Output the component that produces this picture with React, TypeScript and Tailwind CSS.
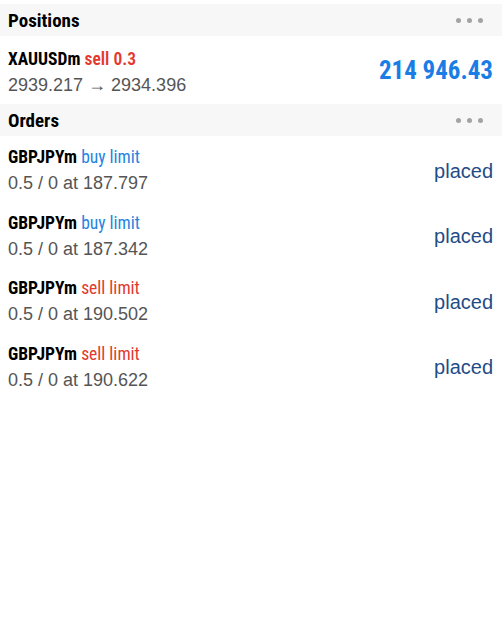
import React from 'react';

type Order = { symbol: string; side: 'buy' | 'sell'; kind: string; detail: string; status: string };

const orders: Order[] = [
  { symbol: 'GBPJPYm', side: 'buy', kind: 'buy limit', detail: '0.5 / 0 at 187.797', status: 'placed' },
  { symbol: 'GBPJPYm', side: 'buy', kind: 'buy limit', detail: '0.5 / 0 at 187.342', status: 'placed' },
  { symbol: 'GBPJPYm', side: 'sell', kind: 'sell limit', detail: '0.5 / 0 at 190.502', status: 'placed' },
  { symbol: 'GBPJPYm', side: 'sell', kind: 'sell limit', detail: '0.5 / 0 at 190.622', status: 'placed' },
];

const narrow = { fontFamily: '"Roboto Condensed", "Open Sans Condensed", Roboto, sans-serif' };
const plain = { fontFamily: '"Liberation Sans", Arial, sans-serif' };

function Dots() {
  return (
    <div className="flex items-center gap-[6px] pr-[1px]">
      <span className="h-[5px] w-[5px] rounded-full bg-[#a3a3a3]" />
      <span className="h-[5px] w-[5px] rounded-full bg-[#a3a3a3]" />
      <span className="h-[5px] w-[5px] rounded-full bg-[#a3a3a3]" />
    </div>
  );
}

function SectionHeader({ title }: { title: string }) {
  return (
    <div className="flex h-[32px] items-center justify-between bg-[#f7f7f7] pl-[8px] pr-[18px]">
      <span style={narrow} className="text-[19px] font-bold leading-none text-black">{title}</span>
      <Dots />
    </div>
  );
}

export default function App() {
  return (
    <div className="min-h-[625px] w-[502px] bg-white pt-[4px]">
      <SectionHeader title="Positions" />

      <div className="flex h-[68px] items-center justify-between pl-[8px] pr-[9px]">
        <div className="flex flex-col pt-[3px]">
          <div style={narrow} className="text-[17.5px] leading-[22px]">
            <span className="font-bold text-black">XAUUSDm</span>{' '}
            <span className="font-semibold text-[#e3382d]">sell 0.3</span>
          </div>
          <div style={plain} className="mt-[4px] text-[18px] leading-[22px] text-[#555]">2939.217 → 2934.396</div>
        </div>
        <span style={narrow} className="text-[25px] font-bold leading-none text-[#1a7de6]">214 946.43</span>
      </div>

      <SectionHeader title="Orders" />

      <div className="flex flex-col">
        {orders.map((o, i) => (
          <div key={i} className="flex h-[65.5px] items-center justify-between pl-[8px] pr-[9px]">
            <div className="flex flex-col pt-[3px]">
              <div style={narrow} className="text-[17.5px] leading-[22px]">
                <span className="font-bold text-black">{o.symbol}</span>{' '}
                <span className={o.side === 'buy' ? 'text-[#2584e0]' : 'text-[#e0392f]'}>{o.kind}</span>
              </div>
              <div style={plain} className="mt-[4px] text-[18px] leading-[22px] text-[#555]">{o.detail}</div>
            </div>
            <span style={plain} className="pt-[4px] text-[20px] leading-none text-[#1f4d87]">{o.status}</span>
          </div>
        ))}
      </div>
    </div>
  );
}
